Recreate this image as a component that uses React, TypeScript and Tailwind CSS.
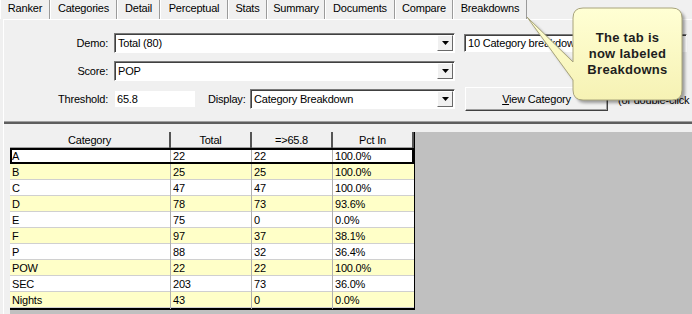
import React from 'react'

const tabs = [
  { label: 'Ranker', w: 'w-[50px]' },
  { label: 'Categories', w: 'w-[67px]' },
  { label: 'Detail', w: 'w-[43px]' },
  { label: 'Perceptual', w: 'w-[68px]' },
  { label: 'Stats', w: 'w-[39px]' },
  { label: 'Summary', w: 'w-[58px]' },
  { label: 'Documents', w: 'w-[70px]' },
  { label: 'Compare', w: 'w-[58px]' },
  { label: 'Breakdowns', w: 'w-[74px]' }
]

const rows = [
  ['A', '22', '22', '100.0%'],
  ['B', '25', '25', '100.0%'],
  ['C', '47', '47', '100.0%'],
  ['D', '78', '73', '93.6%'],
  ['E', '75', '0', '0.0%'],
  ['F', '97', '37', '38.1%'],
  ['P', '88', '32', '36.4%'],
  ['POW', '22', '22', '100.0%'],
  ['SEC', '203', '73', '36.0%'],
  ['Nights', '43', '0', '0.0%']
]

function Combo({ value, width }: { value: string; width: string }) {
  return (
    <div className={`${width} h-[20px] flex items-center bg-white border-t border-l border-[#7a7a7a] border-b border-r border-b-white border-r-white shadow-[inset_1px_1px_0_#404040]`}>
      <span className="flex-1 pl-[3px] pt-[1px] truncate">{value}</span>
      {/* dropdown arrow */}
      <div className="w-[16px] h-[16px] mr-[1px] flex items-center justify-center bg-[#f0f0f0] border border-t-white border-l-white border-b-[#696969] border-r-[#696969]">
        <svg width="7" height="4" viewBox="0 0 7 4">
          <path d="M0 0 H7 L3.5 4 Z" fill="#000" />
        </svg>
      </div>
    </div>
  )
}

export default function App() {
  return (
    <div
      className="relative w-[692px] h-[314px] overflow-hidden bg-[#f0f0f0] flex flex-col text-[11px] text-black tracking-[-0.2px]"
      style={{ fontFamily: '"Liberation Sans", Arial, sans-serif' }}
    >
      {/* Tab strip */}
      <div className="h-[19px] flex">
        {tabs.map(t => (
          <div
            key={t.label}
            className={`${t.w} h-full flex items-center justify-center pb-[2px] border-l border-white border-r border-r-[#9a9a9a]`}
          >
            {t.label}
          </div>
        ))}
      </div>

      {/* Panel */}
      <div className="ml-[3px] border-l border-white flex flex-col flex-1">
        <div className="h-[102px] border-t border-white flex flex-col pt-[13px]">
          {/* Demo row */}
          <div className="h-[20px] flex items-center">
            <div className="w-[104px] text-right">Demo:</div>
            <div className="w-[6px]" />
            <Combo value="Total (80)" width="w-[341px]" />
            <div className="w-[9px]" />
            <div className="w-[223px] h-[18px] flex items-center bg-white border-t border-l border-[#7a7a7a] border-b border-r border-b-white border-r-white shadow-[inset_1px_1px_0_#404040] pl-[3px]">
              10 Category breakdown
            </div>
          </div>
          {/* Score row */}
          <div className="h-[20px] mt-[8px] flex items-center">
            <div className="w-[104px] text-right">Score:</div>
            <div className="w-[6px]" />
            <Combo value="POP" width="w-[341px]" />
          </div>
          {/* Threshold row */}
          <div className="h-[24px] mt-[6px] flex items-center">
            <div className="w-[104px] text-right">Threshold:</div>
            <div className="w-[7px]" />
            <div className="w-[80px] h-[16px] bg-white flex items-center pl-[2px]">65.8</div>
            <div className="w-[13px]" />
            <div className="w-[37px]">Display:</div>
            <div className="w-[5px]" />
            <Combo value="Category Breakdown" width="w-[205px]" />
            <div className="w-[10px]" />
            <div className="w-[143px] h-[24px] flex items-center justify-center bg-[#f0f0f0] border border-t-white border-l-white border-b-[#404040] border-r-[#404040] shadow-[inset_-1px_-1px_0_#a0a0a0]">
              <span>
                <span className="underline">V</span>iew Category
              </span>
            </div>
            <div className="w-[10px]" />
            <div className="whitespace-nowrap pt-[2px]">(or double-click</div>
          </div>
        </div>
        <div className="h-[1px] bg-[#a0a0a0]" />
        <div className="h-[2px] bg-[#5e5e5e]" />

        {/* Results area */}
        <div className="flex-1 flex pl-[6px] pt-[8px]">
          <div className="flex-1 bg-[#c0c0c0] flex items-start">
            <div className="w-[405px] border-r border-b-2 border-black bg-white">
              <div className="grid grid-cols-[161px_81px_81px_81px] h-[16px] bg-[#f0f0f0] border-b border-[#a0a0a0]">
                {['Category', 'Total', '=>65.8', 'Pct In'].map(h => (
                  <div key={h} className="flex items-center justify-center border-r-2 border-[#555555]">
                    {h}
                  </div>
                ))}
              </div>
              {rows.map((r, i) => (
                <div
                  key={r[0]}
                  className={`relative grid grid-cols-[161px_81px_81px_81px] h-[16px] ${i % 2 === 1 ? 'bg-[#ffffc8]' : 'bg-white'} ${
                    i === 0 ? '' : 'border-b border-[#d0d0d0]'
                  }`}
                >
                  {r.map((c, j) => (
                    <div
                      key={j}
                      className={`flex items-center pl-[2px] ${j < 3 ? 'border-r border-[#b0b0b0]' : ''}`}
                    >
                      {c}
                    </div>
                  ))}
                  {/* focus frame of the selected row */}
                  {i === 0 && <div className="absolute inset-0 border-2 border-black pointer-events-none" />}
                </div>
              ))}
            </div>
          </div>
        </div>
      </div>

      {/* Callout overlay */}
      <svg className="absolute left-[520px] top-0" width="172" height="112" viewBox="0 0 172 112">
        <defs>
          <linearGradient id="callFill" x1="0" y1="0" x2="0" y2="1">
            <stop offset="0" stopColor="#ffffd4" />
            <stop offset="1" stopColor="#f6f2b4" />
          </linearGradient>
          <filter id="callShadow" x="-10%" y="-10%" width="130%" height="130%">
            <feGaussianBlur stdDeviation="1.5" />
          </filter>
        </defs>
        <path
          d="M63 8 H152 Q162 8 162 18 V90 Q162 100 152 100 H63 Q53 100 53 90 V80 L7 17 L53 62 V18 Q53 8 63 8 Z"
          fill="#000"
          opacity="0.35"
          transform="translate(3 3)"
          filter="url(#callShadow)"
        />
        <path
          d="M63 8 H152 Q162 8 162 18 V90 Q162 100 152 100 H63 Q53 100 53 90 V80 L7 17 L53 62 V18 Q53 8 63 8 Z"
          fill="url(#callFill)"
          stroke="#a8a47c"
          strokeWidth="1"
        />
      </svg>
      <div className="absolute left-[573px] top-[30px] w-[109px] text-center font-bold text-[13px] leading-[16px] tracking-[0.3px] text-[#1e1e1e]">
        The tab is
        <br />
        now labeled
        <br />
        Breakdowns
      </div>
    </div>
  )
}
